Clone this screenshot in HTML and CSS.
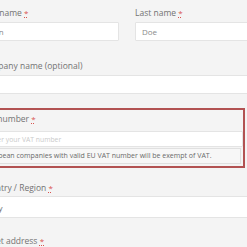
FILE: index.html
```html
<!DOCTYPE html>
<html>
<head>
<meta charset="utf-8">
<link rel="stylesheet" href="styles.css">
</head>
<body>
<form class="form">
  <div class="row two">
    <div class="field">
      <label class="label">First name <abbr class="req">*</abbr></label>
      <div class="input"><span class="value">John</span></div>
    </div>
    <div class="field">
      <label class="label">Last name <abbr class="req">*</abbr></label>
      <div class="input"><span class="value">Doe</span></div>
    </div>
  </div>
  <div class="row field company">
    <label class="label">Company name (optional)</label>
    <div class="input"></div>
  </div>
  <div class="vatbox">
    <label class="label">VAT number <abbr class="req">*</abbr></label>
    <div class="input small"><span class="placeholder">Enter your VAT number</span></div>
    <div class="note">European companies with valid EU VAT number will be exempt of VAT.</div>
  </div>
  <div class="row field country">
    <label class="label">Country / Region <abbr class="req">*</abbr></label>
    <div class="input tall"><span class="value dark">Italy</span></div>
  </div>
  <div class="row field street">
    <label class="label">Street address <abbr class="req">*</abbr></label>
  </div>
</form>
</body>
</html>
```

FILE: styles.css
```css
html, body {
  margin: 0;
  padding: 0;
  background: #f4f4f4;
  overflow: hidden;
}
body {
  font-family: "Open Sans", "Liberation Sans", sans-serif;
  color: #707070;
}
.form {
  margin-left: -20px;
  width: 290px;
  padding-top: 8px;
}
.row.two {
  display: grid;
  grid-template-columns: 139px 1fr;
  column-gap: 16px;
}
.field {
  display: flex;
  flex-direction: column;
}
.label {
  font-size: 8.5px;
  line-height: 10px;
  height: 10px;
  margin-bottom: 4px;
  color: #737373;
}
.req {
  color: #d9534f;
  text-decoration: underline dotted;
  font-size: 8px;
}
.input {
  box-sizing: border-box;
  height: 19px;
  background: #fff;
  border: 1px solid #e4e4e4;
  border-radius: 1px;
  display: flex;
  align-items: center;
  padding-left: 6px;
}
.value {
  font-size: 8px;
  color: #8a8a8a;
}
.value.dark { color: #666; }
.company {
  margin-top: 20px;
}
.vatbox {
  margin-top: 14px;
  margin-left: -8px;
  margin-right: 25px;
  border: 2px solid #b25252;
  padding: 4px 0 0 6px;
  height: 60px;
  box-sizing: border-box;
  display: flex;
  flex-direction: column;
}
.vatbox .label {
  margin-bottom: 7px;
}
.input.small { height: 16px; }
.placeholder {
  font-size: 6.8px;
  color: #cacaca;
}
.note {
  margin-top: 1px;
  border: 1px solid #e0e0e0;
  background: #f7f7f7;
  font-size: 7px;
  line-height: 14px;
  padding-left: 2px;
  margin-right: 2px;
  color: #6a6a6a;
  white-space: nowrap;
}
.country { margin-top: 15px; }
.country .label { margin-bottom: 3px; }
.input.tall { height: 22px; }
.street { margin-top: 18px; }
```
